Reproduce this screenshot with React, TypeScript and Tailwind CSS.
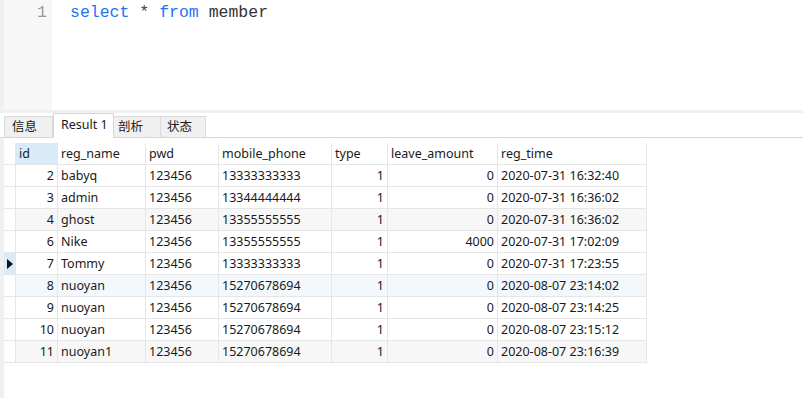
import React from 'react';

const cols = [
  { key: 'id', label: 'id', w: 42, right: true },
  { key: 'reg_name', label: 'reg_name', w: 88 },
  { key: 'pwd', label: 'pwd', w: 73 },
  { key: 'mobile_phone', label: 'mobile_phone', w: 113 },
  { key: 'type', label: 'type', w: 56, right: true },
  { key: 'leave_amount', label: 'leave_amount', w: 110, right: true },
  { key: 'reg_time', label: 'reg_time', w: 149 },
];

const rows = [
  ['2', 'babyq', '123456', '13333333333', '1', '0', '2020-07-31 16:32:40'],
  ['3', 'admin', '123456', '13344444444', '1', '0', '2020-07-31 16:36:02'],
  ['4', 'ghost', '123456', '13355555555', '1', '0', '2020-07-31 16:36:02'],
  ['6', 'Nike', '123456', '13355555555', '1', '4000', '2020-07-31 17:02:09'],
  ['7', 'Tommy', '123456', '13333333333', '1', '0', '2020-07-31 17:23:55'],
  ['8', 'nuoyan', '123456', '15270678694', '1', '0', '2020-08-07 23:14:02'],
  ['9', 'nuoyan', '123456', '15270678694', '1', '0', '2020-08-07 23:14:25'],
  ['10', 'nuoyan', '123456', '15270678694', '1', '0', '2020-08-07 23:15:12'],
  ['11', 'nuoyan1', '123456', '15270678694', '1', '0', '2020-08-07 23:16:39'],
];

const rowBg = (i: number) => (i === 5 ? 'bg-[#f3f8fd]' : i === 2 || i === 8 ? 'bg-[#f7f7f7]' : 'bg-white');

export default function App() {
  return (
    <div className="w-[803px] h-[398px] bg-white flex flex-col overflow-hidden text-[#1a1a1a]" style={{ fontFamily: '"Noto Sans", "Noto Sans CJK SC", sans-serif' }}>
      {/* editor */}
      <div className="h-[110px] flex shrink-0">
        <div className="w-[4px] bg-[#f0f0f0]" />
        <div className="w-[48px] bg-[#f7f7f7] flex justify-end pr-[5px] pt-[2px]">
          <span className="text-[16.5px] leading-[22px] text-[#999]" style={{ fontFamily: '"Liberation Mono", monospace' }}>1</span>
        </div>
        <div className="pl-[18px] pt-[2px] text-[16.5px] leading-[22px]" style={{ fontFamily: '"Liberation Mono", monospace' }}>
          <span className="text-[#1f74f0]">select</span> <span className="text-[#444]">*</span>{' '}
          <span className="text-[#1f74f0]">from</span> <span className="text-[#333]">member</span>
        </div>
      </div>
      <div className="h-[3px] bg-[#f0f0f0] shrink-0" />

      {/* tabs */}
      <div className="h-[25px] flex items-end border-b border-[#d6d6d6] pl-[4px] shrink-0">
        <div className="h-[21px] w-[49px] bg-[#f0f0f0] border border-b-0 border-[#d9d9d9] text-[12.5px] leading-[20px] pl-[7px]">信息</div>
        <div className="h-[25px] w-[61px] bg-white border border-b-0 border-[#d6d6d6] text-[12.5px] leading-[22px] pl-[7px] -mb-px relative">Result 1</div>
        <div className="h-[21px] w-[47px] bg-[#f0f0f0] border border-b-0 border-l-0 border-[#d9d9d9] text-[12.5px] leading-[20px] pl-[4px]">剖析</div>
        <div className="h-[21px] w-[45px] bg-[#f0f0f0] border border-b-0 border-l-0 border-[#d9d9d9] text-[12.5px] leading-[20px] pl-[6px]">状态</div>
      </div>

      {/* grid */}
      <div className="flex-1 flex">
        <div className="w-[4px] bg-[#f0f0f0]" />
        <div className="pt-[5px]">
          <div className="flex h-[22px] text-[12.5px] leading-[21px]">
            <div className="w-[12px] border-r border-b border-[#e6e6e6]" />
            {cols.map((c, j) => (
              <div key={c.key} className={`border-r border-b border-[#e6e6e6] px-[3px] ${j === 0 ? 'bg-[#d9eaf8]' : 'bg-white'}`} style={{ width: c.w }}>
                {c.label}
              </div>
            ))}
          </div>
          {rows.map((r, i) => (
            <div key={i} className={`flex h-[22px] text-[12.5px] leading-[21px] ${rowBg(i)}`}>
              <div className={`w-[12px] border-r border-b border-[#e6e6e6] flex items-center justify-center ${i === 4 ? 'bg-[#d9eaf8]' : 'bg-white'}`}>
                {i === 4 && (
                  <svg width="6" height="10" viewBox="0 0 6 10">
                    <path d="M0 0 L6 5 L0 10 Z" fill="#111" />
                  </svg>
                )}
              </div>
              {cols.map((c, j) => (
                <div key={c.key} className={`border-r border-b border-[#e6e6e6] px-[3px] ${c.right ? 'text-right' : ''}`} style={{ width: c.w }}>
                  {r[j]}
                </div>
              ))}
            </div>
          ))}
        </div>
      </div>
    </div>
  );
}
